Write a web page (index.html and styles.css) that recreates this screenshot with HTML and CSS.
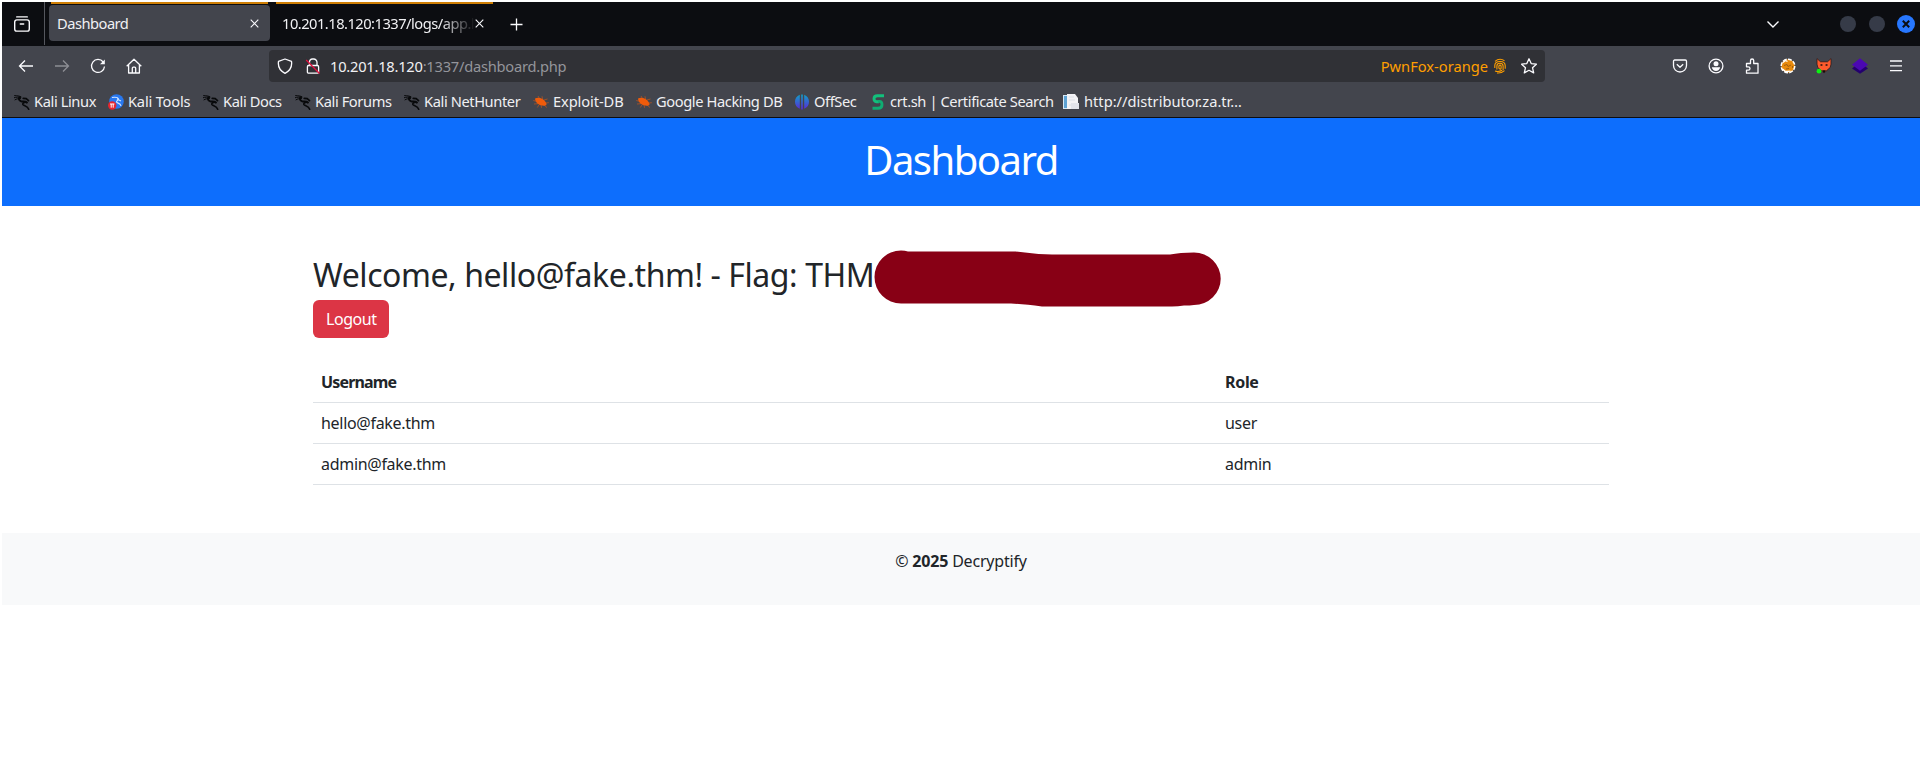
FILE: index.html
```html
<!DOCTYPE html>
<html lang="en">
<head>
<meta charset="utf-8">
<title>Dashboard</title>
<link rel="stylesheet" href="styles.css">
</head>
<body>
<svg class="defs" width="0" height="0">
  <defs>
    <linearGradient id="offsec" x1="0" y1="0" x2="0" y2="1"><stop offset="0" stop-color="#10a0c8"/><stop offset="1" stop-color="#5a28d8"/></linearGradient>
    <symbol id="kali" viewBox="0 0 16 16"><g fill="none" stroke="#08090b" stroke-linecap="round"><path d="M.6 1.6c2.500.2 4.500.2 6.400 1.200M.2 3.700c2-.6 4-.8 6.500-.3M1 5.800c1.600-1 3.400-1.300 5.500-1.300" stroke-width="1"/><path d="M5.500 3.200C4.300 5 5 6.700 7.200 7.300c2 .5 4-.2 5.700 1.200" stroke-width="1.900"/><path d="M9.200 4.400l3 .2 2.300 2.100M12.800 8.500c-2.500-.8-4.600.6-3.800 2.200.8 1.500 4.600.8 5.700 4.600" stroke-width="1.600"/></g></symbol>
    <symbol id="bug" viewBox="0 0 16 16"><path d="M2 4.500c2-1 5-.9 7 .3 1.800 1 3.300 2.500 4.200 4.100.7 1.400.3 2.300-1.100 2.700-2.100.5-5-.1-6.900-1.500C3.500 8.900 2 6.500 2 4.500z" fill="#ef5b0b"/><path d="M.3 6.500l3 .8M1 10l4-.3M4.300 13.500l2-3M5 2l1.500 2.500M9 2.300L9.500 5M11 6l3.500-1M12.500 9l3.300-.3M11 11l3 2.500M8 11l.6 2.800" stroke="#ef5b0b" stroke-width=".7" opacity=".75"/></symbol>
  </defs>
</svg>
<div class="window">
  <div class="tabbar">
    <div class="view"><svg width="18" height="18" viewBox="0 0 18 18" fill="none" stroke="#fbfbfe" stroke-width="1.400" stroke-linecap="round"><path d="M3.700 1.900h10.600"/><rect x="1.700" y="4.900" width="14.600" height="11.200" rx="2.200"/><path d="M7.300 9h3.400"/></svg></div>
    <div class="tab active"><span class="label">Dashboard</span><svg class="x" width="9" height="9" viewBox="0 0 9 9"><path d="M.7.7l7.600 7.600M8.300.7L.7 8.300"/></svg></div>
    <div class="tab"><span class="label fade">10.201.18.120:1337/logs/app.log</span><svg class="x" width="9" height="9" viewBox="0 0 9 9"><path d="M.7.7l7.600 7.600M8.300.7L.7 8.300"/></svg></div>
    <svg class="plus" width="13" height="13" viewBox="0 0 13 13"><path d="M6.500.5v12M.5 6.500h12" stroke="#fbfbfe" stroke-width="1.300"/></svg>
    <svg class="chev" width="14" height="9" viewBox="0 0 14 9"><path d="M1.500 1.500L7 7l5.500-5.500" fill="none" stroke="#fbfbfe" stroke-width="1.400"/></svg>
    <span class="winbtn"></span><span class="winbtn"></span>
    <span class="winbtn close"><svg width="8" height="8" viewBox="0 0 8 8"><path d="M.8.8l6.400 6.400M7.200.8L.8 7.200" stroke="#0b0d12" stroke-width="2"/></svg></span>
  </div>
  <div class="nav">
    <div class="buttons">
      <svg width="16" height="16" viewBox="0 0 16 16"><path d="M15 8H1.700M7 2.500L1.500 8 7 13.500"/></svg>
      <svg class="dim" width="16" height="16" viewBox="0 0 16 16"><path d="M1 8h13.300M9 2.500L14.500 8 9 13.500"/></svg>
      <svg width="16" height="16" viewBox="0 0 16 16"><path d="M13.200 4A6.500 6.500 0 1 0 14.500 8.500"/><path d="M14.800 1.500v4.800H10z" fill="#fbfbfe" stroke="none"/></svg>
      <svg width="16" height="16" viewBox="0 0 16 16"><path d="M.7 8.300L8 1.200l7.300 7.100M2.600 7v8h10.800V7M6.300 15V10.200c0-.7.500-1 1-1h1.400c.6 0 1 .4 1 1V15" stroke-linejoin="round"/></svg>
    </div>
    <div class="urlbar">
      <svg class="shield" width="16" height="16" viewBox="0 0 16 16"><path d="M8 1L1.500 3.300c-.7 4.700 1.600 9.500 6.500 12 4.900-2.500 7.200-7.300 6.500-12z" stroke-linejoin="round"/></svg>
      <svg class="lock" width="16" height="16" viewBox="0 0 16 16"><path d="M4.500 7V4.500A3 3 0 0 1 7.500 1h1A3.300 3.300 0 0 1 12 4.500V7"/><rect x="2.400" y="7.500" width="11.200" height="7.700" rx="1.200"/><path d="M1.200 2L14.500 15.500" stroke="#e2103f"/></svg>
      <span class="url">10.201.18.120<i>:1337/dashboard.php</i></span>
      <span class="container-name">PwnFox-orange</span>
      <svg class="finger" width="12" height="16" viewBox="0 0 12 16"><g fill="none" stroke="#ff9f00" stroke-width="1.100"><path d="M1 3.300Q5.500-.4 10.500 2.700M.8 10V7.500C.8 2.300 11 2 11.200 7.500v3.200M2.900 11.500V8c0-3.700 6-3.700 6.200 0v4M4.900 9.700V8c.2-1.200 2-1.200 2.200 0v2.200c-.2 1.500-2.200 1-2.200-.5M1 13c2.300.8 4.700.7 7.200-.7M3 15c3 .3 5.300-.5 7.500-2.400"/></g></svg>
      <svg class="star" width="16" height="16" viewBox="0 0 16 16"><path d="M8 .8l2.200 4.800 5.200.6-3.900 3.500 1.200 5.200L8 12.300l-4.700 2.600 1.200-5.200L.6 6.200l5.200-.6z" stroke-linejoin="round"/></svg>
    </div>
    <div class="tools">
      <svg width="16" height="16" viewBox="0 0 16 16"><path d="M2.700 2h10.600c.8 0 1.200.5 1.200 1.200V7.500a6.500 6.500 0 0 1-13 0V3.200C1.500 2.500 2 2 2.700 2zM4.800 6.200L8 9.300l3.200-3.100" stroke-linejoin="round"/></svg>
      <svg width="16" height="16" viewBox="0 0 16 16"><circle cx="8" cy="8" r="6.900"/><circle cx="8" cy="5.700" r="2.500" fill="#fbfbfe" stroke="none"/><path d="M3.800 9.300h8.400C11.800 11.700 10 13 8 13S4.200 11.700 3.800 9.300z" fill="#fbfbfe" stroke="none"/></svg>
      <svg width="16" height="16" viewBox="0 0 16 16"><path d="M2.500 5.500h4V2.600a1.500 1.500 0 0 1 3.200 0v2.900H14V15.200H2.500v-3h1.800a1.700 1.700 0 0 0 0-3.400H2.500z" stroke-linejoin="round"/></svg>
      <svg width="16" height="16" viewBox="0 0 16 16"><circle cx="8" cy="8" r="6.800" fill="#e88a0c" stroke="#fff" stroke-width="1.500" stroke-dasharray="4 1.300"/><path d="M3 4.500l2.500-2 2 1M2.500 11l3 2.500 5-.3" stroke="#fff"/><path d="M4 7.500l3-1 1 2 3-1.500M6 11l3-.5M12.500 8v2" stroke="#9a5a10" stroke-width=".9"/></svg>
      <svg width="16" height="16" viewBox="0 0 16 16"><path d="M1 .6l3.500 3.200h7L15 .6v5.600l-.8 3.300-4.500 4-1.700.9-1.700-.9-4.500-4L1 6.200z" fill="#ff5b2d" stroke="#2b1b1b" stroke-width=".8"/><path d="M4.500 7h1.900M9.600 7h1.900" stroke="#1b1010" stroke-width="1.300"/><path d="M7.200 12.800h1.600L8 14z" fill="#111" stroke="#111"/><circle cx="3" cy="13.200" r="2.400" fill="#0cf012" stroke="none"/></svg>
      <svg width="16" height="16" viewBox="0 0 16 16"><path d="M0 10.500l8 5.300 8-5.300-3-2.500H3z" fill="#24006e" stroke="none"/><path d="M8 .2L16 6.700l-8 6L0 6.700z" fill="#4b08b2" stroke="none"/></svg>
      <svg width="16" height="16" viewBox="0 0 16 16"><path d="M2 3h12M2 7.800h12M2 12.600h12"/></svg>
    </div>
  </div>
  <div class="bookmarks">
    <a><svg><use href="#kali"/></svg><span>Kali Linux</span></a>
    <a class="kt"><svg viewBox="0 0 16 16"><circle cx="8.500" cy="7.500" r="7.300" fill="#2878f0"/><path d="M4 3.500c3-.5 6 0 6.500 1.500S8 6.500 8.500 8s4 .8 4.500 4M9 5l4 2" fill="none" stroke="#cfe2ff" stroke-width="1.100"/><circle cx="4.200" cy="11.500" r="4.200" fill="#e5252e"/><path d="M2 10h4.400M3.200 10v3.700M5.200 10v3.700" stroke="#fff"/></svg><span>Kali Tools</span></a>
    <a><svg><use href="#kali"/></svg><span>Kali Docs</span></a>
    <a><svg><use href="#kali"/></svg><span>Kali Forums</span></a>
    <a><svg><use href="#kali"/></svg><span>Kali NetHunter</span></a>
    <a class="edb"><svg><use href="#bug"/></svg><span>Exploit-DB</span></a>
    <a><svg><use href="#bug"/></svg><span>Google Hacking DB</span></a>
    <a><svg viewBox="0 0 16 16"><path d="M5.800.8v14A7.500 7.500 0 0 1 5.800.8zM7.200.5h1.600v15H7.200zM10.200.8v14a7.500 7.500 0 0 0 0-14z" fill="url(#offsec)"/></svg><span>OffSec</span></a>
    <a><svg viewBox="0 0 16 16"><path d="M14 1.800H7.500C5 1.800 4 3 4 4.800s.8 2.800 2.500 3H9" fill="none" stroke="#12c07c" stroke-width="2.900"/><path d="M2.500 14.200H8c3 0 4-1.500 4-3.500S11 7.400 9.500 7.400H8" fill="none" stroke="#10ac72" stroke-width="2.900"/></svg><span>crt.sh | Certificate Search</span></a>
    <a class="dist"><svg viewBox="0 0 16 16"><path d="M0 1h5v14H0z" fill="#d7e8f5"/><path d="M1 2h3v12H1z" fill="#5da2d4"/><path d="M4 0h8l3 4v11H4z" fill="#f3f3f6"/><path d="M6 3h5M6 6h6M6 11h8" stroke="#dcdfe6"/><path d="M8 9h8v6H8z" fill="#e2e4eb"/></svg><span>http://distributor.za.tr…</span></a>
  </div>
  <div class="page">
    <header class="hero"><h1><span>Dashboard</span></h1></header>
    <main class="content">
      <h2><span>Welcome, hello@fake.thm! - Flag: THM</span><svg class="redact" width="348" height="58" viewBox="0 0 348 58"><path d="M27 .5Q31 .5 34 1.500H142Q160 4 178 4.500H296Q306 2.500 320 2.500A26.700 26.250 0 0 1 320 55Q316 55.500 310 55.500Q304 56.500 298 56.500H168Q150 54 137 53.500H27A26.500 26.500 0 0 1 27 .5z" fill="#880015"/></svg></h2>
      <a class="btn"><span>Logout</span></a>
      <table>
        <thead><tr><th>Username</th><th>Role</th></tr></thead>
        <tbody><tr><td>hello@fake.thm</td><td>user</td></tr><tr><td>admin@fake.thm</td><td>admin</td></tr></tbody>
      </table>
    </main>
    <footer><p>© <b>2025</b> Decryptify</p></footer>
  </div>
</div>
</body>
</html>
```
FILE: styles.css
```css
* { box-sizing: border-box; }
body { margin: 0; padding: 2px 2px 0; background: #fff; font-family: "Noto Sans", sans-serif; overflow: hidden; }
.defs { position: absolute; }
.window { display: flex; flex-direction: column; color: #f0f0f3; font-size: 14.67px; line-height: 20px; white-space: nowrap; }

.tabbar { display: flex; align-items: center; height: 44px; background: #0c0d11; }
.view { width: 43px; height: 43px; align-self: flex-start; padding: 13px 0 0 11px; border-right: 1px solid #55575e; }
.tab { position: relative; display: flex; align-items: center; align-self: flex-start; width: 221px; height: 36px; margin: 3px 0 0 4px; padding: 0 11px 0 8px; border-radius: 4px; }
.tab.active { background: #43454d; }
.tab::before { content: ""; position: absolute; top: -3px; left: 2px; width: 217px; height: 2px; background: #cf7f05; }
.label { flex: 1; margin-top: -1px; overflow: hidden; letter-spacing: -.5px; }
.fade { -webkit-mask-image: linear-gradient(90deg, #000 82%, transparent); mask-image: linear-gradient(90deg, #000 82%, transparent); }
.x { fill: none; stroke: #fbfbfe; stroke-width: 1.1; }
.plus { margin-left: 15px; }
.chev { margin-left: auto; margin-right: 60px; }
.winbtn { width: 16px; height: 16px; margin-right: 13px; border-radius: 50%; background: #363b48; }
.close { display: flex; align-items: center; justify-content: center; width: 18px; height: 18px; margin: 0 5px 0 -1px; background: #2777ff; }

.nav { display: flex; align-items: center; height: 40px; background: #43454d; }
.nav svg { flex: none; fill: none; stroke: #fbfbfe; stroke-width: 1.3; }
.nav .dim { opacity: .4; }
.buttons { display: flex; gap: 20px; width: 267px; padding-left: 16px; }
.urlbar { display: flex; align-items: center; width: 1276px; height: 32px; padding: 0 8px; border-radius: 4px; background: #303136; }
.nav .lock { margin: 0 9px 0 12px; }
.url { letter-spacing: -.23px; }
.url i { font-style: normal; color: #94959b; }
.container-name { margin-left: auto; margin-right: 6px; color: #ff9f00; }
.nav .star { margin-left: 15px; }
.tools { display: flex; gap: 20px; margin-left: 127px; }

.bookmarks { display: grid; grid-template-columns: 94px 95px 92px 109px 129px 103px 158px 76px 193px 180px; align-items: center; height: 32px; padding: 0 0 0 12px; background: #43454d; border-bottom: 1px solid #0c0d11; }
.bookmarks a { display: flex; align-items: center; gap: 4px; letter-spacing: -.4px; }
.bookmarks span { margin-top: -1px; }
.bookmarks svg { flex: none; width: 16px; height: 16px; }
.bookmarks .kt { letter-spacing: -.2px; }
.bookmarks .edb { letter-spacing: -.1px; }
.bookmarks .dist { gap: 5px; letter-spacing: 0; }

.page { color: #212529; font-size: 16px; line-height: 24px; }
.hero { height: 88px; padding: 16px; background: #0d6efd; color: #fff; text-align: center; }
h1 { margin: 2px 0 6px; font-size: 40px; line-height: 48px; font-weight: 400; letter-spacing: -1.5px; }
.content { width: 1296px; margin: 48px auto; }
h2 { display: flex; height: 38.4px; margin: 0 0 8px; font-size: 32px; line-height: 42.4px; font-weight: 400; letter-spacing: -.43px; }
.redact { margin: -4px 0 0 0; flex: none; }
.btn { display: inline-block; width: 76px; height: 38px; padding: 7px 13px; border-radius: 6px; background: #dc3545; color: #fff; vertical-align: top; letter-spacing: -.45px; }
table { width: 100%; margin-top: 23px; border-collapse: collapse; table-layout: fixed; }
th, td { height: 41px; padding: 8px; border-bottom: 1px solid #dee2e6; text-align: left; letter-spacing: -.3px; }
th:first-child { width: 904px; letter-spacing: -.85px; }
footer { height: 72px; padding: 16px; background: #f8f9fa; text-align: center; letter-spacing: -.2px; }
footer p { margin: 0; }
```
